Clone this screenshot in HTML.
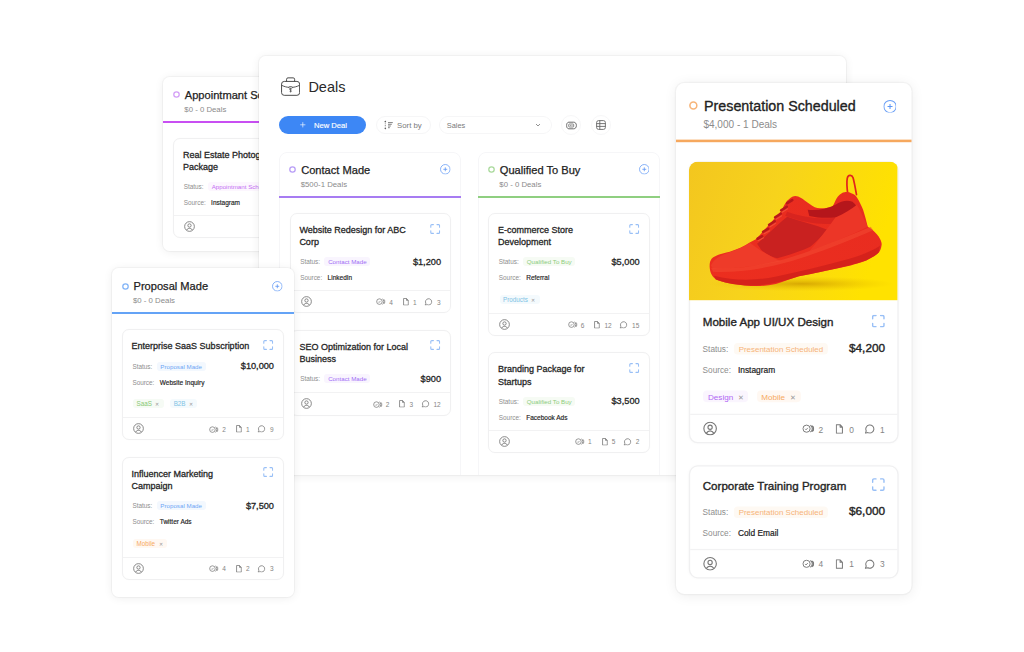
<!DOCTYPE html>
<html><head><meta charset="utf-8">
<style>
*{box-sizing:border-box;margin:0;padding:0}
html,body{width:1024px;height:652px;overflow:hidden;background:#fff;font-family:"Liberation Sans",sans-serif;color:#222}
.abs{position:absolute}
.outer{position:absolute;background:#fff;border-radius:6.5px;box-shadow:0 1px 10px rgba(0,0,0,0.07),0 0 0 1px rgba(0,0,0,0.03)}
.hdr{position:relative;height:45.8px;border-bottom:2px solid #a77cf2}
.dot{position:absolute;left:9.9px;top:14.3px;width:7px;height:7px}
.htl{position:absolute;left:21.8px;top:13.1px;font-size:11.1px;line-height:11.1px;white-space:nowrap;color:#222;-webkit-text-stroke:0.25px #222}
.hsub{position:absolute;left:21.3px;top:28.9px;font-size:7.8px;line-height:7.8px;white-space:nowrap;color:#8b8b8b}
.plus{position:absolute;left:160.6px;top:12.7px;width:10.6px;height:10.6px}
.cards{padding:15.3px 10.3px 0 10.3px}
.card{position:relative;background:#fff;border:1px solid #f0f0f1;border-radius:7px;margin-bottom:16.2px;box-shadow:0 0 2px rgba(0,0,0,0.02)}
.body{padding:10px 9px 4.3px 8.6px}
.t{font-size:9px;line-height:12.2px;color:#252525;-webkit-text-stroke:0.28px #252525;white-space:nowrap}
.exp{position:absolute;right:9.5px;top:9.7px;width:10.4px;height:10px;overflow:visible}
.row{height:16px;display:flex;align-items:center;white-space:nowrap;padding-left:0.8px}
.row.first{margin-top:5.6px}
.lbl{font-size:6.4px;color:#8e8e8e;margin-right:4.4px}
.val{font-size:6.5px;color:#222;-webkit-text-stroke:0.15px #222;margin-left:1px}
.badge{font-size:6.2px;height:9px;line-height:9px;padding:0 3.7px;border-radius:3px}
.amt{margin-left:auto;font-size:9.2px;font-weight:400;color:#262626;-webkit-text-stroke:0.3px #262626;margin-right:0px}
.tags{display:flex;margin-top:9.2px;margin-bottom:4.6px;height:9px;margin-left:1.6px}
.tag{font-size:6.3px;height:9px;line-height:9.6px;padding:0 4.4px 0 3.4px;border-radius:3px;margin-right:6.4px;white-space:nowrap}
.tag i{font-style:normal;margin-left:3.5px;color:#999;font-size:5.2px}
.ftr{height:22.2px;border-top:1px solid #f2f2f3;display:flex;align-items:center;padding:0 9.3px 0 10px}
.av{width:11px;height:11px;overflow:visible}
.ic{display:flex;align-items:center;margin-left:auto;font-size:6.5px;color:#858585}
.ic svg{display:block;overflow:visible}
.pur .badge{color:#9f6df5;background:#f9f5fe}
.grn .badge{color:#8ccb7c;background:#f6fbf4}
.blu .badge{color:#6ea6f5;background:#f3f8fe}
.org .badge{color:#f6b47a;background:#fef9f3}
.mag .badge{color:#c46ef3;background:#fcf6fe}
.tg-green{color:#86c874;background:#f6fbf5}
.tg-teal{color:#7fc2e4;background:#f4fafd}
.tg-org{color:#f6a95f;background:#fff8f2}
.tg-pur{color:#b066f4;background:#faf5fe}
.col{position:absolute;top:95.8px;width:182px;height:340px;border:1px solid #f6f6f8;border-radius:8px;background:#fff}
.col .hdr{margin:-1px -1px 0 -1px}
.col .cards{padding:15.3px 9.4px 0 9.4px}
.deals{left:49.4px;top:23.6px;font-size:14.5px;line-height:14.5px;color:#2a2a2a}
.btn{left:20px;top:60px;width:87px;height:18px;border-radius:9px;background:#3d87f5;color:#fff;-webkit-text-stroke:0.15px #fff;font-size:7.6px;line-height:19px;padding-left:35px;white-space:nowrap}
.btn .pl{position:absolute;left:21.2px;top:6.3px;width:5.6px;height:5.6px}
.pill{top:60px;height:18px;border:1px solid #f6f6f7;border-radius:9px;display:flex;align-items:center;font-size:7.8px;color:#7a7a7a;white-space:nowrap}
.sort{left:116.5px;width:55.5px;padding-left:7px}
.sort span{margin-left:3.5px}
.sel{left:180px;width:113px;padding-left:6.8px;padding-right:10.5px;justify-content:space-between;font-size:7.4px}
.icb{top:59px;width:20px;height:20px;border:1px solid #f7f7f8;border-radius:50%;display:flex;align-items:center;justify-content:center}
.img{width:161.6px;height:108.4px;margin:-1px -1px 0.8px -1px;border-radius:7px 7px 0 0;overflow:hidden;width:calc(100% + 2px)}
.img svg{display:block}
.n1{margin:0 10px 0 3.4px}.n2{margin:0 7.6px 0 4.3px}.n3{margin-left:4.2px}
.ic svg{position:relative;top:0.3px}
.ic span{position:relative;top:0.6px}
.nosrc .body{padding-bottom:5.8px}
#pres .htl{top:12.6px}
#pres .t{position:relative;top:-0.6px;left:0.9px}
</style></head><body>

<svg width="0" height="0" style="position:absolute">
 <defs>
  <symbol id="dot" viewBox="0 0 7 7"><circle cx="3.5" cy="3.5" r="2.7" fill="none" stroke="currentColor" stroke-width="1.25"/></symbol>
  <symbol id="plus" viewBox="0 0 12 12"><circle cx="6" cy="6" r="5.4" fill="none" stroke="#6a9ff6" stroke-width="0.9"/><path d="M6 3.8v4.4M3.8 6h4.4" stroke="#5b95f5" stroke-width="0.9" fill="none"/></symbol>
  <symbol id="exp" viewBox="0 0 10 10"><path d="M0.6 3.2V1.6A1 1 0 0 1 1.6 0.6H3.2M6.8 0.6H8.4A1 1 0 0 1 9.4 1.6V3.2M9.4 6.8V8.4A1 1 0 0 1 8.4 9.4H6.8M3.2 9.4H1.6A1 1 0 0 1 0.6 8.4V6.8" fill="none" stroke="#98bff6" stroke-width="1.1" stroke-linecap="round"/></symbol>
  <symbol id="av" viewBox="0 0 12 12"><circle cx="6" cy="6" r="5.3" fill="none" stroke="#777" stroke-width="0.95"/><circle cx="6" cy="4.9" r="1.8" fill="none" stroke="#777" stroke-width="0.95"/><path d="M2.9 9.9c0.8-1.3 1.8-1.9 3.1-1.9s2.3 0.6 3.1 1.9" fill="none" stroke="#777" stroke-width="1"/></symbol>
  <symbol id="vid" viewBox="0 0 10 8"><circle cx="3.6" cy="4" r="3.1" fill="none" stroke="#7a7a7a" stroke-width="0.85"/><path d="M2.3 4.1l0.9 0.9 1.5-1.7" fill="none" stroke="#7a7a7a" stroke-width="0.75"/><path d="M6.9 1.1a3.3 3.3 0 0 1 0 5.8M8.5 1.5a3.1 3.1 0 0 1 0 5" fill="none" stroke="#7a7a7a" stroke-width="1"/></symbol>
  <symbol id="doc" viewBox="0 0 6 8"><path d="M0.5 0.5H3.6L5.5 2.5V7.5H0.5Z M3.6 0.5V2.5H5.5" fill="none" stroke="#7a7a7a" stroke-width="0.85" stroke-linejoin="round"/></symbol>
  <symbol id="cmt" viewBox="0 0 9 8"><path d="M1.2 7.5l0.7-1.9A3.3 3.3 0 1 1 3.3 7Z" fill="none" stroke="#7a7a7a" stroke-width="0.85" stroke-linejoin="round"/></symbol>
  <symbol id="case" viewBox="0 0 20 19.6"><path d="M5.8 4.5V2.3a1.5 1.5 0 0 1 1.5-1.5h5.4a1.5 1.5 0 0 1 1.5 1.5V4.5" fill="none" stroke="#444" stroke-width="1"/><rect x="0.6" y="4.5" width="18.8" height="14.5" rx="2.8" fill="none" stroke="#444" stroke-width="1"/><path d="M0.8 8.6c2.8 1.4 5.2 1.9 7.4 2.1M11.8 10.7c2.2-0.2 4.6-0.7 7.4-2.1" fill="none" stroke="#444" stroke-width="0.95"/><rect x="8.1" y="9.9" width="3.8" height="1.7" rx="0.85" fill="none" stroke="#444" stroke-width="0.8"/><path d="M10.8 12.9c-0.2-0.4-0.5-0.5-0.9-0.5-0.5 0-0.9 0.3-0.9 0.7 0 0.9 1.9 0.5 1.9 1.5 0 0.4-0.4 0.7-1 0.7-0.4 0-0.8-0.2-1-0.6M10 11.8v4" fill="none" stroke="#444" stroke-width="0.7"/></symbol>
  <symbol id="sort" viewBox="0 0 10 10"><path d="M1.3 1.6v6.8" stroke="#777" stroke-width="0.8" stroke-dasharray="1 0.7"/><path d="M0.3 2.1L1.3 0.6 2.3 2.1ZM0.3 7.9L1.3 9.4 2.3 7.9Z" fill="#555"/><path d="M4 2.6h4.8M4 4.3h3.8M4 6h2.8M4 7.7h1.8" fill="none" stroke="#6a6a6a" stroke-width="0.85"/></symbol>
  <symbol id="link" viewBox="0 0 11 9"><path d="M2.8 1.2H7.6C9.4 1.2 10.4 2.6 10.4 4.5S9.4 7.8 7.6 7.8H2.8C1.4 7.8 0.6 6.4 0.6 4.5S1.4 1.2 2.8 1.2Z" fill="none" stroke="#6a6a6a" stroke-width="1"/><rect x="2.7" y="3" width="5" height="3" rx="0.8" fill="none" stroke="#6a6a6a" stroke-width="0.8"/><path d="M4.4 4v1M6 4v1" stroke="#6a6a6a" stroke-width="0.7"/></symbol>
  <symbol id="tbl" viewBox="0 0 10 10"><rect x="0.6" y="0.6" width="8.8" height="8.8" rx="2" fill="none" stroke="#666" stroke-width="0.9"/><path d="M0.6 3.6h8.8M0.6 6.4h8.8M3.8 0.6v8.8" fill="none" stroke="#666" stroke-width="0.9"/></symbol>
  <symbol id="shoe" viewBox="0 0 208 139"><defs><linearGradient id="bg" x1="0" y1="0" x2="1" y2="0.25"><stop offset="0" stop-color="#f3c61f"/><stop offset="0.45" stop-color="#f7d31c"/><stop offset="1" stop-color="#ffe200"/></linearGradient><radialGradient id="sh" cx="0.5" cy="0.5" r="0.5"><stop offset="0" stop-color="#cf9c00" stop-opacity="0.8"/><stop offset="1" stop-color="#e8be00" stop-opacity="0"/></radialGradient><linearGradient id="up" x1="0" y1="1" x2="1" y2="0"><stop offset="0" stop-color="#ec2e1f"/><stop offset="1" stop-color="#e82c20"/></linearGradient></defs>
<rect width="208" height="139" fill="url(#bg)"/>
<ellipse cx="112" cy="122" rx="92" ry="7.5" fill="url(#sh)"/>
<path d="M158.4 33 C157.6 27 157 21 157.8 16.6 C158.6 13 162.4 12.8 163.6 16 C164.8 20 165.8 26 167 33" fill="none" stroke="#e2231c" stroke-width="1.7" stroke-linecap="round"/>
<path d="M20.7 105.3 C20.5 99 22.5 96.5 25.3 95 C30 92 36 91 40.7 89.9 C48 87.5 55 84.5 60.6 80.7 C63 79.5 65 78.5 66.7 77.6 C72 72 76 67 80.6 62.3 C85 57 89 52 92.8 48.5 C95 43 97 39 100 37.3 C102 35.2 104 34.3 106.1 34.3 C110 34.5 113 37 120 41.9 C124 45 127 46.5 130.7 46.5 C136 46.6 140 46 143 45 C146 40 147 36 149 34.3 C151 32 153 30.6 155.2 30.4 C158 30 160 30.6 161.3 31.2 C165 32.5 166.5 34 167.5 35.8 C170 40 172 44 173.6 48.1 C175.5 54 177 60 178.2 64.9 C180 66 181.5 67 182.8 68 C186 71 189 74 190.5 77.2 C192 80 192.3 82 192 83.4 C191.5 87 190.5 89.5 189 91 C185 94.5 181 96.5 176.7 98.6 C170 101 165 102.5 161.3 103.6 C145 107.5 126 111 109.7 114.5 C101 117 94 120 86.7 122.2 C76 124.5 66 124.8 56 123.7 C45 122.5 34 120.5 26.9 117.6 C22.5 114.5 21 110 20.7 105.3Z" fill="url(#up)"/>
<path d="M68 82 C78 73 88 63 98 55 C112 60 126 63 138 68 C132 75 127 80 121 85 C110 90 98 94 88 96.5 C82 95 76 92 72 88Z" fill="#c92120"/>
<path d="M98 50 C112 55 128 58 146 56 L143 62 C128 63 112 60 96 54Z" fill="#d8241f"/>
<path d="M118.4 48.1 C128 49 138 47 146 43 C152 39 158 38 163 40 C165.5 42 167 44 167.5 46 C160 52 152 55 146 55.7 C136 56.5 128 56 120 54.2Z" fill="#b5161b"/>
<path d="M146 55.7 C155 52 162 47 167.5 43 C170.5 48 174 56 178.2 64.9 C160 74 140 82 120 89.5 C128 80 137 68 146 55.7Z" fill="#ec3627"/>
<path d="M22 104 C24 98 30 94 40.7 90.5 C48 88 55 85 61 81 C67 86 73 90 79 93 C84 96 88 98 92 99.5 C70 104 45 107 24 107Z" fill="#ee3b29"/>
<path d="M22 106 C45 108 70 104 95 97.5 C120 90 150 78 181.3 64.9 L183.5 68.5 C152 82 122 94 96 101 C70 108 45 111 24 110Z" fill="#f34a33" opacity="0.55"/>
<path d="M25 114 C45 119 65 119 86 115 C110 110 135 104 160 97 C172 93.5 182 89.5 190.5 84 L189 91 C185 94.5 181 96.5 176.7 98.6 C165 102.5 140 108.5 109.7 114.5 C94 120 76 124.5 56 123.7 C45 122.5 34 120.5 26.9 117.6Z" fill="#cf1f1a" opacity="0.8"/>
<path d="M68.5 77 L73 74.5 M74 70 L79 67 M80 63 L85.5 59.5 M86 55.5 L91.5 52 M92 48.5 L97.5 45 M98 41.5 L103 38.5" stroke="#b9181a" stroke-width="2.6" stroke-linecap="round"/>
<path d="M69 79 L74.5 76 M75 72 L80.5 69 M81 65 L86.5 61.5 M87 57.5 L92.5 54 M93 50.5 L98.5 47" stroke="#f2503a" stroke-width="1.1" stroke-linecap="round" opacity="0.9"/>
</symbol>
 </defs>
</svg>

<!-- APPOINTMENT -->
<div class="outer mag" style="left:163px;top:76.8px;width:182px;height:174.5px"><div class="hdr" style="border-color:#c84ff2"><svg class="dot" style="color:#d29cf6"><use href="#dot"/></svg><div class="htl">Appointmant Scheduled</div><div class="hsub">$0 - 0 Deals</div><svg class="plus"><use href="#plus"/></svg></div><div class="cards"><div class="card"><div class="body"><div class="t">Real Estate Photography<br>Package</div><svg class="exp" style="top:9.7px"><use href="#exp"/></svg><div class="row first"><span class="lbl">Status:</span><span class="badge">Appointmant Scheduled</span></div><div class="row"><span class="lbl">Source:</span><span class="val">Instagram</span></div></div><div class="ftr"><svg class="av"><use href="#av"/></svg></div></div></div></div>
<!-- DEALS PANEL -->
<div id="panel" class="outer" style="left:259px;top:56px;width:587px;height:418.5px;overflow:hidden"><svg class="abs" style="left:22px;top:20.8px" width="19.2" height="19" viewBox="0 0 20 19.6"><use href="#case"/></svg><div class="abs deals">Deals</div><div class="abs btn"><svg class="pl" viewBox="0 0 6 6"><path d="M3 0.2v5.6M0.2 3h5.6" stroke="#fff" stroke-width="0.75" opacity="0.9"/></svg>New Deal</div><div class="abs pill sort"><svg width="10" height="10" viewBox="0 0 10 10"><use href="#sort"/></svg><span>Sort by</span></div><div class="abs pill sel"><span>Sales</span><svg width="6" height="4" viewBox="0 0 6 4"><path d="M1 1l2 2 2-2" fill="none" stroke="#777" stroke-width="0.8"/></svg></div><div class="abs icb" style="left:302px"><svg width="11" height="9" viewBox="0 0 11 9"><use href="#link"/></svg></div><div class="abs icb" style="left:332px"><svg width="10" height="10" viewBox="0 0 10 10"><use href="#tbl"/></svg></div><div class="col pur" style="left:20.4px"><div class="hdr" style="border-color:#a77cf2"><svg class="dot" style="color:#b79cf6"><use href="#dot"/></svg><div class="htl">Contact Made</div><div class="hsub">$500-1 Deals</div><svg class="plus"><use href="#plus"/></svg></div><div class="cards"><div class="card"><div class="body"><div class="t">Website Redesign for ABC<br>Corp</div><svg class="exp" style="top:9.7px"><use href="#exp"/></svg><div class="row first"><span class="lbl">Status:</span><span class="badge">Contact Made</span><span class="amt">$1,200</span></div><div class="row"><span class="lbl">Source:</span><span class="val">LinkedIn</span></div></div><div class="ftr"><svg class="av"><use href="#av"/></svg><div class="ic"><svg width="9.4" height="7.2"><use href="#vid"/></svg><span class="n1">4</span><svg width="5.9" height="7.6"><use href="#doc"/></svg><span class="n2">1</span><svg width="8.6" height="7.6"><use href="#cmt"/></svg><span class="n3">3</span></div></div></div><div class="card nosrc"><div class="body"><div class="t">SEO Optimization for Local<br>Business</div><svg class="exp" style="top:9.7px"><use href="#exp"/></svg><div class="row first"><span class="lbl">Status:</span><span class="badge">Contact Made</span><span class="amt">$900</span></div></div><div class="ftr"><svg class="av"><use href="#av"/></svg><div class="ic"><svg width="9.4" height="7.2"><use href="#vid"/></svg><span class="n1">2</span><svg width="5.9" height="7.6"><use href="#doc"/></svg><span class="n2">3</span><svg width="8.6" height="7.6"><use href="#cmt"/></svg><span class="n3">12</span></div></div></div></div></div><div class="col grn" style="left:219px"><div class="hdr" style="border-color:#8fcf80"><svg class="dot" style="color:#a8d99a"><use href="#dot"/></svg><div class="htl">Qualified To Buy</div><div class="hsub">$0 - 0 Deals</div><svg class="plus"><use href="#plus"/></svg></div><div class="cards"><div class="card"><div class="body"><div class="t">E-commerce Store<br>Development</div><svg class="exp" style="top:9.7px"><use href="#exp"/></svg><div class="row first"><span class="lbl">Status:</span><span class="badge">Qualified To Buy</span><span class="amt">$5,000</span></div><div class="row"><span class="lbl">Source:</span><span class="val">Referral</span></div><div class="tags"><span class="tag tg-teal">Products<i>&#x2715;</i></span></div></div><div class="ftr"><svg class="av"><use href="#av"/></svg><div class="ic"><svg width="9.4" height="7.2"><use href="#vid"/></svg><span class="n1">6</span><svg width="5.9" height="7.6"><use href="#doc"/></svg><span class="n2">12</span><svg width="8.6" height="7.6"><use href="#cmt"/></svg><span class="n3">15</span></div></div></div><div class="card"><div class="body"><div class="t">Branding Package for<br>Startups</div><svg class="exp" style="top:9.7px"><use href="#exp"/></svg><div class="row first"><span class="lbl">Status:</span><span class="badge">Qualified To Buy</span><span class="amt">$3,500</span></div><div class="row"><span class="lbl">Source:</span><span class="val">Facebook Ads</span></div></div><div class="ftr"><svg class="av"><use href="#av"/></svg><div class="ic"><svg width="9.4" height="7.2"><use href="#vid"/></svg><span class="n1">1</span><svg width="5.9" height="7.6"><use href="#doc"/></svg><span class="n2">5</span><svg width="8.6" height="7.6"><use href="#cmt"/></svg><span class="n3">2</span></div></div></div></div></div></div>
<!-- PROPOSAL MADE -->
<div id="proposal" class="outer blu" style="left:111.7px;top:268.3px;width:182.6px;height:328.5px"><div class="hdr" style="border-color:#64a3f6"><svg class="dot" style="color:#80b3f7"><use href="#dot"/></svg><div class="htl">Proposal Made</div><div class="hsub">$0 - 0 Deals</div><svg class="plus"><use href="#plus"/></svg></div><div class="cards"><div class="card"><div class="body"><div class="t">Enterprise SaaS Subscription</div><svg class="exp" style="top:9.7px"><use href="#exp"/></svg><div class="row first"><span class="lbl">Status:</span><span class="badge">Proposal Made</span><span class="amt">$10,000</span></div><div class="row"><span class="lbl">Source:</span><span class="val">Website Inquiry</span></div><div class="tags"><span class="tag tg-green">SaaS<i>&#x2715;</i></span><span class="tag tg-teal">B2B<i>&#x2715;</i></span></div></div><div class="ftr"><svg class="av"><use href="#av"/></svg><div class="ic"><svg width="9.4" height="7.2"><use href="#vid"/></svg><span class="n1">2</span><svg width="5.9" height="7.6"><use href="#doc"/></svg><span class="n2">1</span><svg width="8.6" height="7.6"><use href="#cmt"/></svg><span class="n3">9</span></div></div></div><div class="card"><div class="body"><div class="t">Influencer Marketing<br>Campaign</div><svg class="exp" style="top:9.7px"><use href="#exp"/></svg><div class="row first"><span class="lbl">Status:</span><span class="badge">Proposal Made</span><span class="amt">$7,500</span></div><div class="row"><span class="lbl">Source:</span><span class="val">Twitter Ads</span></div><div class="tags"><span class="tag tg-org">Mobile<i>&#x2715;</i></span></div></div><div class="ftr"><svg class="av"><use href="#av"/></svg><div class="ic"><svg width="9.4" height="7.2"><use href="#vid"/></svg><span class="n1">4</span><svg width="5.9" height="7.6"><use href="#doc"/></svg><span class="n2">2</span><svg width="8.6" height="7.6"><use href="#cmt"/></svg><span class="n3">3</span></div></div></div></div></div>
<!-- PRESENTATION -->
<div id="pres" class="outer org" style="left:676px;top:83px;width:182.8px;height:396.9px;transform:scale(1.287);transform-origin:0 0"><div class="hdr" style="border-color:#f6a85e"><svg class="dot" style="color:#f7b57a"><use href="#dot"/></svg><div class="htl">Presentation Scheduled</div><div class="hsub">$4,000 - 1 Deals</div><svg class="plus"><use href="#plus"/></svg></div><div class="cards"><div class="card"><div class="img"><svg width="100%" height="108.4" viewBox="0 0 208 139.4" preserveAspectRatio="none"><use href="#shoe"/></svg></div><div class="body"><div class="t">Mobile App UI/UX Design</div><svg class="exp" style="top:117.9px"><use href="#exp"/></svg><div class="row first"><span class="lbl">Status:</span><span class="badge">Presentation Scheduled</span><span class="amt">$4,200</span></div><div class="row"><span class="lbl">Source:</span><span class="val">Instagram</span></div><div class="tags"><span class="tag tg-pur">Design<i>&#x2715;</i></span><span class="tag tg-org">Mobile<i>&#x2715;</i></span></div></div><div class="ftr"><svg class="av"><use href="#av"/></svg><div class="ic"><svg width="9.4" height="7.2"><use href="#vid"/></svg><span class="n1">2</span><svg width="5.9" height="7.6"><use href="#doc"/></svg><span class="n2">0</span><svg width="8.6" height="7.6"><use href="#cmt"/></svg><span class="n3">1</span></div></div></div><div class="card"><div class="body"><div class="t">Corporate Training Program</div><svg class="exp" style="top:9.7px"><use href="#exp"/></svg><div class="row first"><span class="lbl">Status:</span><span class="badge">Presentation Scheduled</span><span class="amt">$6,000</span></div><div class="row"><span class="lbl">Source:</span><span class="val">Cold Email</span></div></div><div class="ftr"><svg class="av"><use href="#av"/></svg><div class="ic"><svg width="9.4" height="7.2"><use href="#vid"/></svg><span class="n1">4</span><svg width="5.9" height="7.6"><use href="#doc"/></svg><span class="n2">1</span><svg width="8.6" height="7.6"><use href="#cmt"/></svg><span class="n3">3</span></div></div></div></div></div>
</body></html>
